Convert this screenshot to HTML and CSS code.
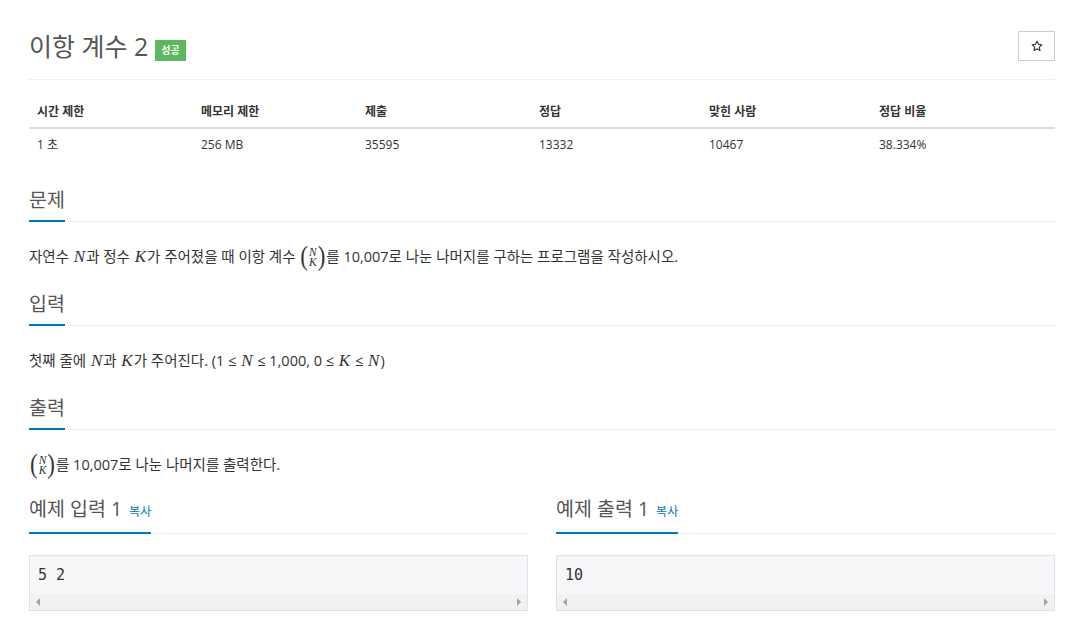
FILE: index.html
```html
<!DOCTYPE html>
<html lang="ko">
<head>
  <meta charset="UTF-8">
  <meta name="viewport" content="width=device-width, initial-scale=1.0">
  <title>이항 계수 2</title>
  <link rel="stylesheet" href="styles.css">
</head>
<body>
  <div class="container">
    <!-- 제목 -->
    <div class="page-header">
      <h1 class="title">
        <span class="title-text">이항 계수 2</span>
        <span class="badge-success">성공</span>
      </h1>
      <button class="star-btn" title="즐겨찾기">
        <svg width="12" height="12" viewBox="0 0 24 24" fill="none" stroke="#333" stroke-width="2.2" stroke-linejoin="round">
          <path d="M12 2.5l2.9 6.2 6.8.8-5 4.6 1.3 6.7L12 17.5l-6 3.3 1.3-6.7-5-4.6 6.8-.8z"/>
        </svg>
      </button>
    </div>

    <!-- 제한 정보 -->
    <table class="info">
      <thead>
        <tr>
          <th class="c1">시간 제한</th>
          <th class="c2">메모리 제한</th>
          <th class="c3">제출</th>
          <th class="c4">정답</th>
          <th class="c5">맞힌 사람</th>
          <th>정답 비율</th>
        </tr>
      </thead>
      <tbody>
        <tr>
          <td>1 초</td>
          <td>256 MB</td>
          <td>35595</td>
          <td>13332</td>
          <td>10467</td>
          <td>38.334%</td>
        </tr>
      </tbody>
    </table>

    <section class="problem-section">
      <div class="headline"><h2>문제</h2></div>
      <p>자연수 <i class="math">N</i>과 정수 <i class="math">K</i>가 주어졌을 때 이항 계수 <span class="binom"><span class="paren">(</span><span class="stack"><i>N</i><i>K</i></span><span class="paren">)</span></span>를 10,007로 나눈 나머지를 구하는 프로그램을 작성하시오.</p>
    </section>

    <section class="problem-section">
      <div class="headline"><h2>입력</h2></div>
      <p>첫째 줄에 <i class="math">N</i>과 <i class="math">K</i>가 주어진다. (1 ≤ <i class="math">N</i> ≤ 1,000, 0 ≤ <i class="math">K</i> ≤ <i class="math">N</i>)</p>
    </section>

    <section class="problem-section">
      <div class="headline"><h2>출력</h2></div>
      <p><span class="binom"><span class="paren">(</span><span class="stack"><i>N</i><i>K</i></span><span class="paren">)</span></span>를 10,007로 나눈 나머지를 출력한다.</p>
    </section>

    <!-- 예제 -->
    <div class="samples">
      <section class="sample">
        <div class="headline"><h2>예제 입력 1 <a class="copy" href="#">복사</a></h2></div>
        <div class="sample-box">
          <pre>5 2</pre>
          <div class="hscroll"><span class="arrow-left"></span><span class="arrow-right"></span></div>
        </div>
      </section>
      <section class="sample">
        <div class="headline"><h2>예제 출력 1 <a class="copy" href="#">복사</a></h2></div>
        <div class="sample-box">
          <pre>10</pre>
          <div class="hscroll"><span class="arrow-left"></span><span class="arrow-right"></span></div>
        </div>
      </section>
    </div>
  </div>
</body>
</html>
```

FILE: styles.css
```css
html, body {
  margin: 0;
  padding: 0;
  background: #fff;
  font-family: "Open Sans", "Noto Sans CJK KR", sans-serif;
  font-size: 14px;
  color: #333;
}
.container {
  width: 1026px;
  margin-left: 29px;
  padding-top: 30px;
}
/* 제목 영역 */
.page-header {
  display: flex;
  justify-content: space-between;
  align-items: center;
  padding-bottom: 18px;
  border-bottom: 1px solid #eee;
  margin-bottom: 15px;
}
.title {
  display: flex;
  align-items: center;
  gap: 7px;
  margin: 0;
  font-size: 25px;
  font-weight: 400;
  line-height: 30px;
  color: #555;
}
.badge-success {
  margin-top: 10px;
  padding: 3px 6px;
  font-size: 10px;
  line-height: 15px;
  font-weight: 700;
  color: #fff;
  background: #5cb85c;
}
.star-btn {
  width: 37px;
  height: 30px;
  padding: 0;
  display: flex;
  align-items: center;
  justify-content: center;
  background: #fff;
  border: 1px solid #ccc;
  cursor: pointer;
}
/* 제한 정보 표 */
.info {
  width: 100%;
  border-collapse: collapse;
  font-size: 12px;
  margin-bottom: 28px;
}
.info th, .info td {
  text-align: left;
  line-height: 17px;
}
.info th {
  padding: 8px 8px 7px;
  font-weight: 700;
  border-bottom: 2px solid #ddd;
}
.info td {
  padding: 7px 8px 8px;
}
.info .c1, .info .c2 { width: 148px; }
.info .c3 { width: 158px; }
.info .c4, .info .c5 { width: 154px; }
/* 섹션 */
.problem-section {
  margin-bottom: 26px;
}
.headline {
  border-bottom: 1px dotted #ddd;
  margin-bottom: 25px;
}
.headline h2 {
  display: inline-block;
  margin: 0 0 -1px;
  padding-bottom: 9px;
  font-size: 19.5px;
  font-weight: 400;
  line-height: 22px;
  color: #555;
  border-bottom: 2px solid #0076c0;
}
.problem-section p {
  margin: 0;
  font-size: 14.5px;
  line-height: 20px;
}
.math {
  font-family: "Liberation Serif", serif;
  font-size: 17px;
  padding: 0 1px;
}
/* 이항 계수 표기 */
.binom {
  display: inline-flex;
  align-items: center;
  vertical-align: middle;
  height: 20px;
  margin: -2px 1px 0 1px;
  font-family: "Liberation Serif", serif;
}
.binom .paren {
  font-size: 23px;
  line-height: 20px;
  transform: scaleY(1.15);
}
.binom .stack {
  display: flex;
  flex-direction: column;
  align-items: center;
  font-size: 11.5px;
  line-height: 10px;
  padding: 0 1px;
}
/* 예제 */
.samples {
  display: grid;
  grid-template-columns: 1fr 1fr;
  gap: 28px;
  margin-top: -3px;
}
.sample .headline {
  margin-bottom: 21px;
}
.copy {
  font-size: 12px;
  color: #0076c0;
  text-decoration: none;
  margin-left: 2px;
}
.sample-box {
  border: 1px solid #e1e1e8;
  background: #f7f7f9;
}
.sample-box pre {
  margin: 0;
  padding: 9px 8px;
  font-family: "DejaVu Sans Mono", monospace;
  font-size: 15px;
  line-height: 20px;
  color: #333;
}
.hscroll {
  height: 16px;
  background: #f1f1f1;
  display: flex;
  justify-content: space-between;
  align-items: center;
  padding: 0 6px;
}
.arrow-left, .arrow-right {
  width: 0;
  height: 0;
  border-top: 4px solid transparent;
  border-bottom: 4px solid transparent;
}
.arrow-left { border-right: 4px solid #a3a3a3; }
.arrow-right { border-left: 4px solid #a3a3a3; }
```
